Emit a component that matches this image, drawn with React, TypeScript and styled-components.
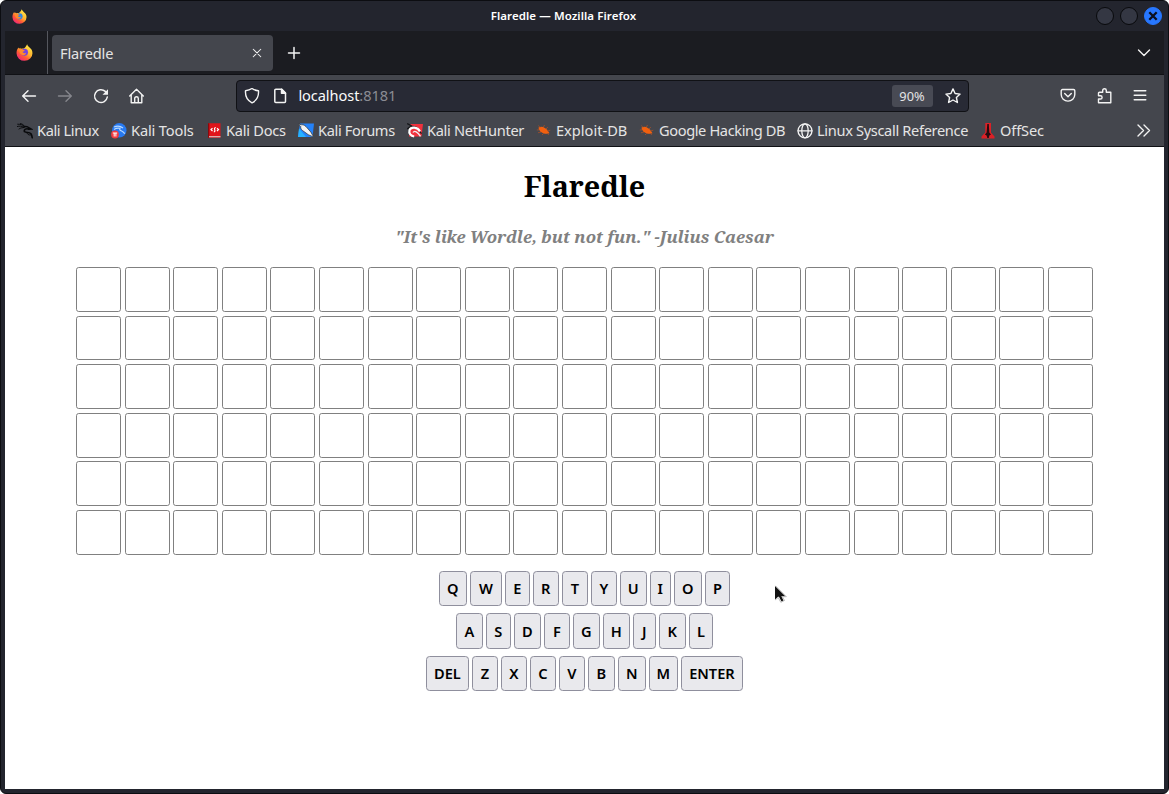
import React from "react";
import styled, { createGlobalStyle } from "styled-components";

const GlobalStyle = createGlobalStyle`
  * { box-sizing: border-box; }
  html, body { margin: 0; background: #fff; }
  svg { display: block; flex: none; }
`;

const Window = styled.div`
  width: 1169px;
  height: 794px;
  display: flex;
  flex-direction: column;
  padding: 1px 4px 4px;
  background: #23252e;
  border: 1px solid #0c0d11;
  border-radius: 6px;
  overflow: hidden;
  font-family: "Noto Sans", sans-serif;
  color: #e4e4e4;
  white-space: nowrap;
`;

const TitleBar = styled.header`
  height: 29px;
  flex: none;
  display: grid;
  grid-template-columns: 38px 1fr 80px;
  align-items: center;
  padding: 0 2px 0 7px;
`;

const WindowTitle = styled.div`
  text-align: center;
  font-size: 11.5px;
  font-weight: 600;
  letter-spacing: 0.08px;
  color: #fff;
  padding: 0 5px 2px 0;
`;

const WindowControls = styled.div`
  display: flex;
  justify-content: flex-end;
  gap: 6px;
  padding-bottom: 1px;
`;

const ControlButton = styled.button<{ $close?: boolean }>`
  width: 18px;
  height: 18px;
  padding: 0;
  display: grid;
  place-items: center;
  border-radius: 50%;
  border: 1px solid ${(p) => (p.$close ? "#2777ff" : "#08090c")};
  background: ${(p) => (p.$close ? "#2777ff" : "#343743")};
`;

const TabBar = styled.div`
  height: 44px;
  flex: none;
  display: flex;
  align-items: center;
  background: #1b1c21;
  border-bottom: 1px solid #101115;
`;

const PinnedTab = styled.div`
  width: 43px;
  height: 43px;
  display: grid;
  place-items: center;
  padding-right: 3px;
  border-right: 1px solid #55575e;
`;

const Tab = styled.div`
  width: 221px;
  height: 36px;
  margin-left: 4px;
  padding: 0 10px 0 8px;
  display: flex;
  align-items: center;
  justify-content: space-between;
  border-radius: 4px;
  background: #44464d;
  font-size: 14.6px;
  letter-spacing: -0.15px;
`;

const NewTab = styled.div`
  margin: 1px 0 0 13px;
  flex: 1;
`;

const TabMenu = styled.div`
  padding-right: 12px;
`;

const NavBar = styled.nav`
  height: 41px;
  flex: none;
  display: flex;
  align-items: center;
  background: #44464d;
`;

const NavButtons = styled.div`
  width: 231px;
  display: flex;
  gap: 20px;
  padding-left: 16px;
`;

const AddressBar = styled.div`
  width: 733px;
  height: 32px;
  display: flex;
  align-items: center;
  padding: 0 7px;
  border: 1px solid #101115;
  border-radius: 4px;
  background: #282a35;
`;

const PageInfo = styled.div`
  margin-left: 12px;
`;

const Address = styled.div`
  flex: 1;
  margin-left: 10.4px;
  padding-bottom: 2px;
  font-size: 14.6px;
  letter-spacing: -0.08px;
  color: #fbfbfb;
`;

const Port = styled.span`
  color: #8b8c93;
`;

const Zoom = styled.div`
  width: 41px;
  height: 22px;
  margin-right: 12px;
  padding-right: 1px;
  border-radius: 3px;
  background: #484a54;
  font-size: 12.8px;
  line-height: 22px;
  text-align: center;
`;

const Tools = styled.div`
  flex: 1;
  display: flex;
  justify-content: flex-end;
  gap: 20px;
  padding-right: 16px;
`;

const BookmarksBar = styled.div`
  height: 31px;
  flex: none;
  display: flex;
  align-items: center;
  padding: 0 12px 2px;
  background: #44464d;
  border-bottom: 1px solid #101115;
`;

const Bookmark = styled.div<{ $w: number; $track: number }>`
  width: ${(p) => p.$w}px;
  display: flex;
  align-items: center;
  gap: 4px;
  font-size: 14.6px;
  letter-spacing: ${(p) => p.$track}px;

  svg { position: relative; top: 1px; }
`;

const Overflow = styled.div`
  margin-left: auto;
`;

const Page = styled.main`
  flex: 1;
  display: flex;
  flex-direction: column;
  align-items: center;
  background: #fff;
  position: relative;
`;

const Heading = styled.h1`
  margin: 19px 0 0;
  height: 40px;
  font: 700 28.8px/40px "Noto Serif", "Droid Serif", "DejaVu Serif Condensed", "DejaVu Serif", serif;
  letter-spacing: -0.1px;
  color: #000;
`;

const Quote = styled.h2`
  margin: 19px 0 0;
  height: 24px;
  font: italic 700 16.8px/24px "Noto Serif", "Droid Serif", "DejaVu Serif Condensed", "DejaVu Serif", serif;
  letter-spacing: -0.02px;
  color: #808080;
`;

const Board = styled.div`
  display: grid;
  grid-template-columns: repeat(21, 45px);
  grid-auto-rows: 44.8px;
  column-gap: 3.6px;
  row-gap: 3.8px;
  margin-top: 18px;
`;

const Cell = styled.div`
  border: 1px solid #808080;
  border-radius: 2.7px;
`;

const Keyboard = styled.div`
  display: flex;
  flex-direction: column;
  align-items: center;
  gap: 7.2px;
  margin-top: 16.2px;
`;

const KeyRow = styled.div<{ $lift: number }>`
  display: flex;
  gap: 3.4px;

  button { padding: 0 0 ${(p) => p.$lift}px; }
`;

const Key = styled.button<{ $w: number }>`
  width: ${(p) => p.$w}px;
  height: 35.2px;
  border: 1px solid #8f8f9d;
  border-radius: 3.6px;
  background: #e9e9ed;
  color: #000;
  font: 600 14.6px "Noto Sans", sans-serif;
`;

const Pointer = styled.svg`
  position: absolute;
  left: 769px;
  top: 438px;
`;

const keyRows: [string, number][][] = [
  [["Q", 27.6], ["W", 31.6], ["E", 24.6], ["R", 25.6], ["T", 25.6], ["Y", 25.6], ["U", 26.6], ["I", 20.6], ["O", 27.6], ["P", 25]],
  [["A", 26.6], ["S", 24.6], ["D", 26.6], ["F", 25.6], ["G", 26.6], ["H", 26.6], ["J", 22.6], ["K", 26.6], ["L", 24]],
  [["DEL", 42.6], ["Z", 25.6], ["X", 25.6], ["C", 25.6], ["V", 25.6], ["B", 26.6], ["N", 27.6], ["M", 28.6], ["ENTER", 62]],
];

const Firefox = ({ size, id, core }: { size: number; id: string; core: string }) => (
  <svg width={size} height={size} viewBox="0 0 16 16">
    <defs>
      <linearGradient id={id} x1="0.85" y1="0.05" x2="0.2" y2="0.95">
        <stop offset="0" stopColor="#fff04a" />
        <stop offset="0.45" stopColor="#ffb02e" />
        <stop offset="0.7" stopColor="#ff5a35" />
        <stop offset="1" stopColor="#f0257a" />
      </linearGradient>
    </defs>
    <path d="M10.5 0.2c.4 1.600 1.500 2.400 2.500 3.400 1.300 1.100 2.500 2.500 2.500 5A7.500 7.200 0 0 1 .5 8.700C.4 6.600 1.100 4.500 2.400 3.200l.5 1.300 1-.9.5.9 1.600-.2C7 4.600 9 3.500 10.500.2z" fill={`url(#${id})`} />
    <circle cx="8" cy="7.700" r="3.300" fill={core} />
    <path d="M3 5.200c1.200-.7 2.500-.5 3.600.3l1.700.5c-.3.900-1.500.9-2 1.300.2 1.500 2.300 1.700 3.300.800-.2 2-2 2.800-3.800 2.200C4.100 9.700 3 7.500 3 5.200z" fill="#ff8a2a" />
  </svg>
);

const Line = ({ size = 16, w = 1.3, color = "#f3f3f3", children }: { size?: number; w?: number; color?: string; children: React.ReactNode }) => (
  <svg width={size} height={size} viewBox="0 0 16 16" fill="none" stroke={color} strokeWidth={w} strokeLinecap="round" strokeLinejoin="round">
    {children}
  </svg>
);

const KaliDragon = () => (
  <svg width="16" height="16" viewBox="0 0 16 16" fill="none" stroke="#08090b" strokeLinecap="round">
    <path d="M.7 1.200c3 0 5.300.7 7 2.300M.3 3.500c2.200-.6 4.600-.6 6.500.8M2 6c1.200-1 2.500-1.300 4-1.300M3.500.5c1.500.3 3 1.300 4 2.500" strokeWidth="0.900" />
    <path d="M6.500 4.200c2.200-1.300 4.200-.6 5.700.8l1.800 1-2.300.2C9.500 5 6.500 6.500 7.500 8.700c1.800 1.300 4.700.2 6.500 2 .9 1.200 1 2.500 1.200 4" strokeWidth="1.600" />
    <path d="M10 9.500c.2 2 1.700 2.700 3.500 2.500" strokeWidth="1" />
  </svg>
);

const KaliTools = () => (
  <svg width="16" height="16" viewBox="0 0 16 16">
    <circle cx="8.300" cy="7.300" r="7.200" fill="#2779f0" />
    <path d="M3 4c3.500-1.500 7-.6 9 1M3 6.500c2.500-1.700 4.500-1.500 6-1.200-1.500 3 3.500 2.200 4.700 5.500" stroke="#b8d9ff" strokeWidth="1.200" fill="none" />
    <circle cx="4" cy="11.500" r="3.900" fill="#f23a3f" />
    <path d="M1.800 10h4.400M3.200 10v3.500M4.900 10v3.500" stroke="#fff" strokeWidth="1" />
  </svg>
);

const KaliDocs = () => (
  <svg width="16" height="16" viewBox="0 0 16 16">
    <path d="M2 .2h12.500v14.500H2z" fill="#e0141a" />
    <path d="M2 .2h1.300v14.500H2z" fill="#8c080c" />
    <path d="M3 13.200h11.500v1H3z" fill="#ddd" />
    <path d="M6.500 5.200L5 6.500 6.500 8.200M11 5.200l1.500 1.300L11 8.200M9.800 4.500c-3.300.6 1 3.700-2 4.500" stroke="#fff" strokeWidth="1.200" fill="none" />
  </svg>
);

const KaliForums = () => (
  <svg width="16" height="16" viewBox="0 0 16 16">
    <path d="M2 .5h14l-1.500 13.500H0z" fill="#2482fa" />
    <path d="M0 14L1 5.500 8 14z" fill="#27b2ff" />
    <path d="M.2 1l3.500.8c1.800-.4 4 1 5.600 3.200l3.500 4 3 5.200-5.500-2.500-5.800-4.200C3.200 6.500 2.500 5 2.700 3.500z" fill="#f3f3f3" stroke="#363d45" strokeWidth=".8" />
  </svg>
);

const NetHunter = () => (
  <svg width="16" height="16" viewBox="0 0 16 16">
    <path d="M3.500 1H16l-1.500 12.500H2z" fill="#f0313d" />
    <path d="M.2.5l4.500 2.500M.3 6C3 2.800 7 2.500 10 4.700l4.500 6" stroke="#17181b" strokeWidth="1.300" fill="none" />
    <path d="M13 8.500C10.500 3.500 4 3.500 2.500 7.200c-1 3.300 1.500 5.800 4.700 6.300" stroke="#fff" strokeWidth="2.200" fill="none" />
    <path d="M6 9.500c1.500-2.500 4.500-.7 7.500 3.800" stroke="#eee" strokeWidth="1.400" fill="none" />
  </svg>
);

const Bug = () => (
  <svg width="16" height="16" viewBox="0 0 16 16">
    <path d="M2.500 4.500c3-2 7-.2 9.500 3.500l1.500 2.300-2.700.5C6.500 11 3 8.500 2.500 4.500z" fill="#f1600f" />
    <path d="M4 4.500L2.500 2.500M7.500 4l1-2M10 6l1.800-2M11.500 8l2.800-.8M3 6.800L.8 7M5 9l-3 .8M8 10l-2 2M12 10.500l.5 1.500" stroke="#a85128" strokeWidth=".8" />
  </svg>
);

const Globe = () => (
  <Line w={1.3}>
    <circle cx="8" cy="7.800" r="7" />
    <ellipse cx="8" cy="7.800" rx="3.200" ry="7" />
    <path d="M1 7.800h14" />
  </Line>
);

const OffSec = () => (
  <svg width="16" height="16" viewBox="0 0 16 16">
    <path d="M5.300 0h5.700v9.500l3.500 4V15.500H1.500v-2l3.800-4z" fill="#dc2026" />
    <path d="M7.300 1h1.500l.5 8.500 1.700 2-1.700 1-.5 2.500H7.300l-.7-2.500-1.700-1 1.700-2z" fill="#260c10" />
  </svg>
);

const bookmarks: [string, number, number, React.ReactNode][] = [
  ["Kali Linux", 94, -0.4, <KaliDragon />],
  ["Kali Tools", 95, -0.14, <KaliTools />],
  ["Kali Docs", 92, -0.25, <KaliDocs />],
  ["Kali Forums", 109, -0.35, <KaliForums />],
  ["Kali NetHunter", 129, -0.32, <NetHunter />],
  ["Exploit-DB", 103, 0, <Bug />],
  ["Google Hacking DB", 158, -0.38, <Bug />],
  ["Linux Syscall Reference", 183, -0.33, <Globe />],
  ["OffSec", 70, -0.12, <OffSec />],
];

export default function App() {
  return (
    <Window>
      <GlobalStyle />
      <TitleBar>
        <Firefox size={15} id="flameSmall" core="#2f86e5" />
        <WindowTitle>Flaredle — Mozilla Firefox</WindowTitle>
        <WindowControls>
          <ControlButton aria-label="Minimize" />
          <ControlButton aria-label="Maximize" />
          <ControlButton aria-label="Close" $close>
            <svg width="10" height="10" viewBox="0 0 10 10" stroke="#0b1020" strokeWidth="2.300">
              <path d="M1.300 1.300l7.400 7.400M8.700 1.300L1.300 8.700" />
            </svg>
          </ControlButton>
        </WindowControls>
      </TitleBar>
      <TabBar>
        <PinnedTab><Firefox size={17} id="flameTab" core="#7543e0" /></PinnedTab>
        <Tab>
          Flaredle
          <Line size={12} w={1.4}><path d="M3 3l10 10M13 3L3 13" /></Line>
        </Tab>
        <NewTab><Line w={1.5}><path d="M8 2.500v11M2.500 8h11" /></Line></NewTab>
        <TabMenu><Line w={1.4}><path d="M2.500 5l5.500 5.500L13.500 5" /></Line></TabMenu>
      </TabBar>
      <NavBar>
        <NavButtons>
          <Line w={1.4}><path d="M14.500 8H2M7 2.800L1.700 8 7 13.200" /></Line>
          <Line w={1.4} color="#85868c"><path d="M1.500 8H14M9 2.800L14.300 8 9 13.200" /></Line>
          <Line w={1.5}>
            <path d="M14.300 9a6.400 6.400 0 1 1-2-5.600L13.500 4.500" />
            <path d="M15 1.200v5.600H9.500z" fill="#f3f3f3" stroke="none" />
          </Line>
          <Line w={1.4}>
            <path d="M.7 7.900L7.500 1.200 14.300 7.900M2.200 7v7.800h10.600V7M5.700 14.500v-4a1.800 1.800 0 0 1 3.600 0v4" />
          </Line>
        </NavButtons>
        <AddressBar>
          <Line w={1.4}><path d="M8 .5C6 1.900 4 2.500 1.500 2.700c-.4 5.500 1.500 9.700 6.500 12.200 5-2.500 6.900-6.700 6.500-12.200C12 2.500 10 1.900 8 .5z" /></Line>
          <PageInfo>
            <Line w={1.5}>
              <path d="M3.800 1.200h6L13.500 5v8.500a1 1 0 0 1-1 1H3.800a1 1 0 0 1-1-1V2.200a1 1 0 0 1 1-1z" />
              <path d="M9.500 1.200v4h4z" fill="#f3f3f3" />
            </Line>
          </PageInfo>
          <Address>localhost<Port>:8181</Port></Address>
          <Zoom>90%</Zoom>
          <Line w={1.4}><path d="M8 .9l2.100 4.600 5 .6-3.700 3.400 1 5L8 12l-4.400 2.500 1-5L.9 6.100l5-.6z" /></Line>
        </AddressBar>
        <Tools>
          <Line w={1.4}>
            <path d="M2.500 1.500h11a1.300 1.300 0 0 1 1.300 1.300V6.500a6.800 6.600 0 0 1-13.600 0V2.800A1.300 1.300 0 0 1 2.500 1.500zM4.700 5.500L8 8.700 11.300 5.500" />
          </Line>
          <Line w={1.4}>
            <path d="M3.500 4.300h3.200V2.500a1.800 1.800 0 0 1 3.600 0v1.800h4.500v10.500H2.500V11h2a1.600 1.600 0 0 0 0-3.200h-2V5.300a1 1 0 0 1 1-1z" />
          </Line>
          <Line w={1.4}><path d="M2.200 2.800h11.600M2.200 7.300h11.600M2.200 11.800h11.600" /></Line>
        </Tools>
      </NavBar>
      <BookmarksBar>
        {bookmarks.map(([label, width, track, icon]) => (
          <Bookmark key={label} $w={width} $track={track}>{icon}{label}</Bookmark>
        ))}
        <Overflow><Line w={1.4}><path d="M2 3l5.500 5.500L2 14M8 3l5.500 5.500L8 14" /></Line></Overflow>
      </BookmarksBar>
      <Page>
        <Heading>Flaredle</Heading>
        <Quote>"It's like Wordle, but not fun." -Julius Caesar</Quote>
        <Board>
          {Array.from({ length: 126 }, (_, i) => <Cell key={i} />)}
        </Board>
        <Keyboard>
          {keyRows.map((row, i) => (
            <KeyRow key={i} $lift={i === 0 ? 1 : 0}>
              {row.map(([label, width]) => <Key key={label} $w={width}>{label}</Key>)}
            </KeyRow>
          ))}
        </Keyboard>
        <Pointer width="14" height="20" viewBox="0 0 14 20">
          <path d="M1 1v13.500l3-2.800h1L7.500 16.500l2-1-2.200-4.300h4z" fill="#111" />
          <path d="M1 15l3.200-2.500L6.800 17.300l3.700-1.800-2.200-3.800h4L1.500.8" fill="none" stroke="#aaa" strokeWidth=".8" />
        </Pointer>
      </Page>
    </Window>
  );
}
